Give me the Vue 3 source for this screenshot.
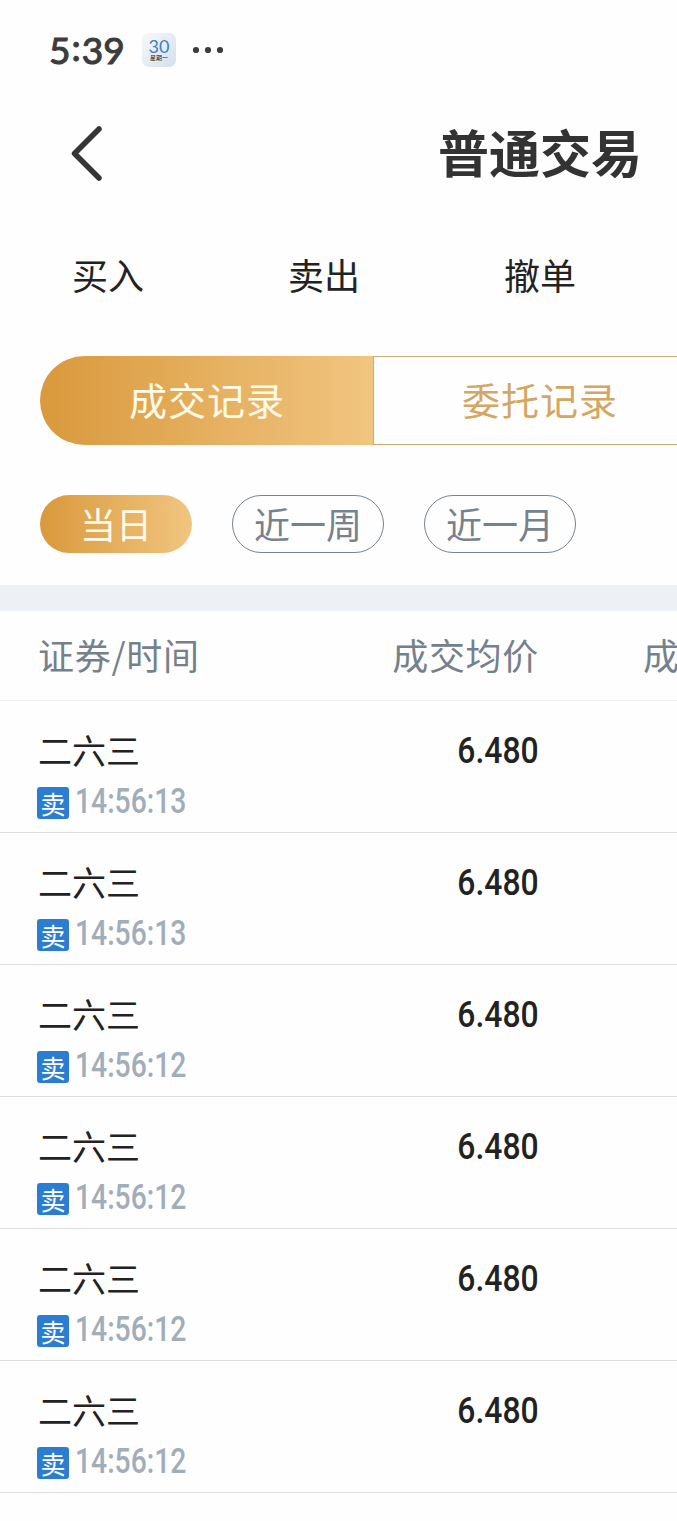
<script setup>
import { ref } from "vue";

const menus = ["买入", "卖出", "撤单"];
const segments = ["成交记录", "委托记录"];
const ranges = ["当日", "近一周", "近一月"];

const activeSegment = ref(0);
const activeRange = ref(0);

const deals = ref([
  { id: 1, name: "二六三", side: "卖", time: "14:56:13", price: "6.480" },
  { id: 2, name: "二六三", side: "卖", time: "14:56:13", price: "6.480" },
  { id: 3, name: "二六三", side: "卖", time: "14:56:12", price: "6.480" },
  { id: 4, name: "二六三", side: "卖", time: "14:56:12", price: "6.480" },
  { id: 5, name: "二六三", side: "卖", time: "14:56:12", price: "6.480" },
  { id: 6, name: "二六三", side: "卖", time: "14:56:12", price: "6.480" },
]);
</script>

<template>
  <div class="screen">
    <div class="page">
      <div class="status">
        <span class="clock">5<span class="colon">:</span>39</span>
        <div class="calendar">
          <span class="day">30</span>
          <span class="weekday">星期一</span>
        </div>
        <svg class="more" width="32" height="8" viewBox="0 0 32 8">
          <circle cx="4" cy="4" r="3.1" />
          <circle cx="16" cy="4" r="3.1" />
          <circle cx="28" cy="4" r="3.1" />
        </svg>
      </div>

      <header class="navbar">
        <button class="back">
          <svg width="36" height="60" viewBox="0 0 36 60">
            <path d="M31 5 L6.5 29.5 L31 54" />
          </svg>
        </button>
        <h1>普通交易</h1>
      </header>

      <nav class="menus">
        <a v-for="m in menus" :key="m">{{ m }}</a>
      </nav>

      <div class="segments">
        <button
          v-for="(s, i) in segments"
          :key="s"
          :class="{ active: activeSegment === i }"
          @click="activeSegment = i"
        >
          {{ s }}
        </button>
      </div>

      <div class="ranges">
        <button
          v-for="(r, i) in ranges"
          :key="r"
          :class="{ active: activeRange === i }"
          @click="activeRange = i"
        >
          {{ r }}
        </button>
      </div>

      <div class="divider"></div>

      <div class="row head">
        <span>证券/时间</span>
        <span class="right">成交均价</span>
        <span class="next">成</span>
      </div>

      <div v-for="d in deals" :key="d.id" class="row deal">
        <div class="stock">
          <div class="name">{{ d.name }}</div>
          <div class="meta">
            <span class="side">{{ d.side }}</span>
            <span class="time">{{ d.time }}</span>
          </div>
        </div>
        <div class="right">
          <span class="price">{{ d.price }}</span>
        </div>
      </div>
    </div>
  </div>
</template>

<style>
body {
  margin: 0;
  background: #fff;
}
</style>

<style scoped>
.screen {
  width: 100%;
  height: 1521px;
  overflow: hidden;
  background: #fefefe;
  font-family: "Noto Sans CJK SC", sans-serif;
  color: #222;
}

/* the page is wider than the viewport and is cut at the right */
.page {
  width: 1080px;
}

button {
  margin: 0;
  padding: 0;
  border: none;
  background: none;
  font-family: inherit;
  box-sizing: border-box;
}

.status {
  display: flex;
  align-items: center;
  height: 100px;
  padding-left: 49px;
}

.clock {
  width: 93px;
  font-family: Lato, sans-serif;
  font-size: 37px;
  font-weight: 400;
  line-height: 46px;
  color: #3c3c3c;
  -webkit-text-stroke: 1.1px #3c3c3c;
}

.colon {
  display: inline-block;
  margin: 0 1px;
  transform: translateY(-3px);
}

.calendar {
  display: flex;
  flex-direction: column;
  align-items: center;
  width: 34px;
  height: 34px;
  border-radius: 7px;
  background: linear-gradient(135deg, #f6f9fb, #d5e0ea);
}

.day {
  margin-top: 5px;
  font-family: Lato, sans-serif;
  font-size: 18px;
  line-height: 16px;
  color: #3f7fc4;
}

.weekday {
  font-size: 6px;
  line-height: 8px;
  color: #222;
}

.more {
  margin-left: 16px;
  fill: #3c3c3c;
}

.navbar {
  display: grid;
  grid-template-columns: 1fr auto 1fr;
  align-items: center;
  height: 108px;
  padding: 0 67px;
}

.back {
  width: 38px;
  height: 60px;
  padding-left: 1px;
}

.back svg {
  display: block;
  fill: none;
  stroke: #363636;
  stroke-width: 5.5;
  stroke-linecap: round;
  stroke-linejoin: round;
}

h1 {
  margin: 0 0 6px;
  font-size: 51px;
  line-height: 60px;
  font-weight: 700;
  color: #333;
}

.menus {
  display: grid;
  grid-template-columns: repeat(5, 216px);
  height: 148px;
}

.menus a {
  padding-top: 41px;
  font-size: 36px;
  line-height: 50px;
  text-align: center;
}

.segments {
  display: flex;
  width: 1000px;
  height: 89px;
  margin-left: 40px;
}

.segments button {
  width: 333px;
  padding-bottom: 5px;
  border: 1px solid #c9ac76;
  border-width: 1px 0 1px 1px;
  font-size: 38px;
  letter-spacing: 1px;
  color: #d3a761;
}

.segments button:first-child {
  border-radius: 45px 0 0 45px;
}

.segments button.active {
  border-color: transparent;
  background: linear-gradient(90deg, #d9993c, #f1c580) border-box;
  color: #fffbe8;
}

.ranges {
  display: flex;
  gap: 40px;
  padding: 50px 40px 32px;
}

.ranges button {
  width: 152px;
  height: 58px;
  border: 1px solid #77828b;
  border-radius: 29px;
  padding-bottom: 2px;
  font-size: 36px;
  line-height: 54px;
  color: #77828c;
}

.ranges button.active {
  border-color: transparent;
  background: linear-gradient(90deg, #d9993c, #f1c580) border-box;
  color: #fffbe8;
}

.divider {
  height: 26px;
  background: #edf1f5;
}

.row {
  display: grid;
  grid-template-columns: 300px 201px 252px;
  padding-left: 38px;
  box-sizing: border-box;
}

.right {
  text-align: right;
}

.head {
  height: 90px;
  border-bottom: 1px solid #eeeff0;
  font-size: 36px;
  line-height: 86px;
  letter-spacing: 0.7px;
  color: #74818c;
}

.next {
  padding-left: 104px;
}

.deal {
  height: 132px;
  padding-top: 24px;
  border-bottom: 1px solid #dcdddf;
}

.name {
  font-size: 34px;
  line-height: 50px;
}

.meta {
  display: flex;
  align-items: center;
  height: 54px;
}

.side {
  width: 32px;
  height: 32px;
  margin: 2px 6px 0 -1px;
  border-radius: 3px;
  background: #2a7dd2;
  font-size: 25px;
  line-height: 32px;
  text-align: center;
  color: #fff;
}

.time,
.price {
  display: inline-block;
  font-family: Roboto, sans-serif;
  font-weight: 500;
}

.time {
  margin-bottom: 3px;
  font-size: 34.5px;
  line-height: 46px;
  color: #a1adb8;
  transform: scaleX(0.82);
  transform-origin: left center;
}

.price {
  font-size: 37.5px;
  line-height: 51px;
  transform: scaleX(0.85);
  transform-origin: right center;
}
</style>
